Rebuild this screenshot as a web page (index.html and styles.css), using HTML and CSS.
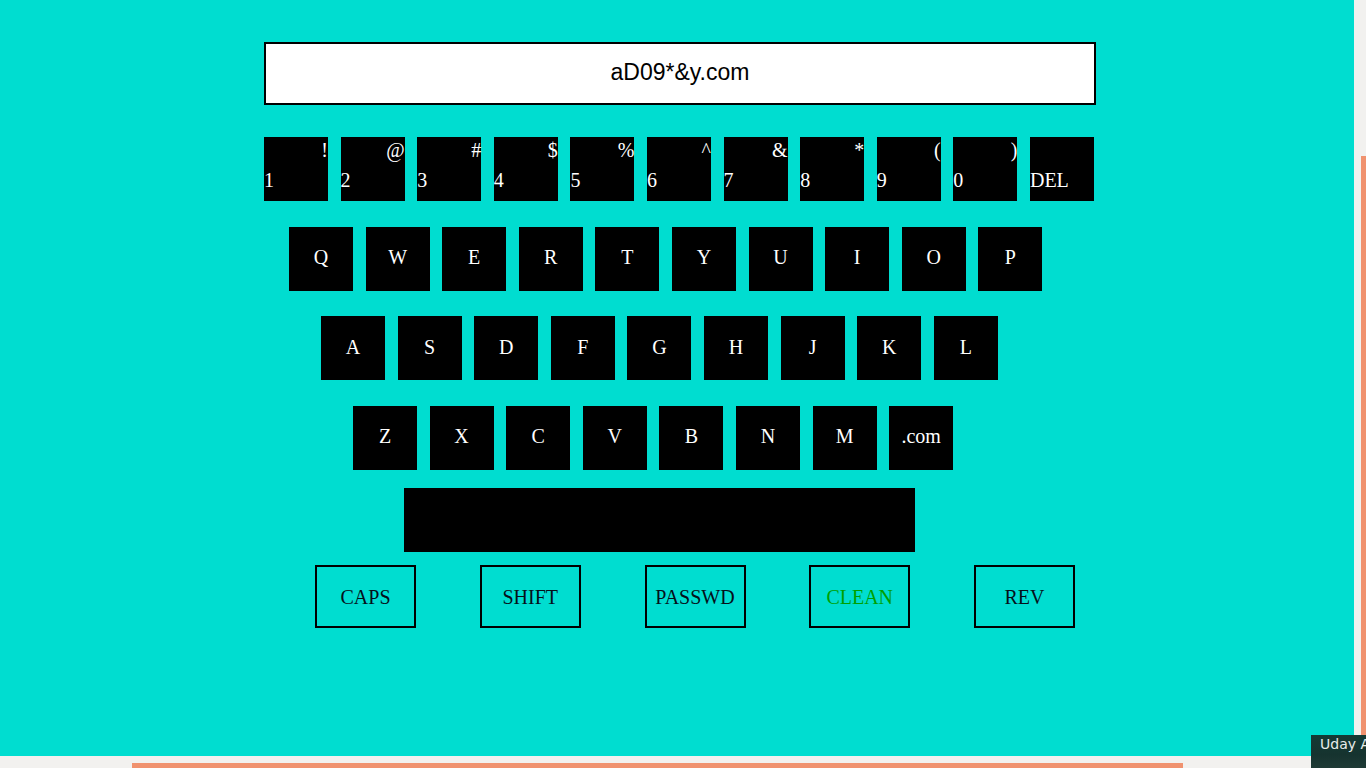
FILE: index.html
```html
<!DOCTYPE html>
<html>
<head>
<meta charset="utf-8">
<title>Keyboard</title>
<link rel="stylesheet" href="styles.css">
</head>
<body>
<div class="page">
  <div class="app">
    <div class="display">aD09*&amp;y.com</div>
    <div class="keyboard">
      <div class="row row-num">
        <div class="key num"><span class="sym">!</span><span class="dig">1</span></div>
        <div class="key num"><span class="sym">@</span><span class="dig">2</span></div>
        <div class="key num"><span class="sym">#</span><span class="dig">3</span></div>
        <div class="key num"><span class="sym">$</span><span class="dig">4</span></div>
        <div class="key num"><span class="sym">%</span><span class="dig">5</span></div>
        <div class="key num"><span class="sym">^</span><span class="dig">6</span></div>
        <div class="key num"><span class="sym">&amp;</span><span class="dig">7</span></div>
        <div class="key num"><span class="sym">*</span><span class="dig">8</span></div>
        <div class="key num"><span class="sym">(</span><span class="dig">9</span></div>
        <div class="key num"><span class="sym">)</span><span class="dig">0</span></div>
        <div class="key num"><span class="sym">&nbsp;</span><span class="dig">DEL</span></div>
      </div>
      <div class="row row-q">
        <div class="key">Q</div><div class="key">W</div><div class="key">E</div><div class="key">R</div><div class="key">T</div>
        <div class="key">Y</div><div class="key">U</div><div class="key">I</div><div class="key">O</div><div class="key">P</div>
      </div>
      <div class="row row-a">
        <div class="key">A</div><div class="key">S</div><div class="key">D</div><div class="key">F</div><div class="key">G</div>
        <div class="key">H</div><div class="key">J</div><div class="key">K</div><div class="key">L</div>
      </div>
      <div class="row row-z">
        <div class="key">Z</div><div class="key">X</div><div class="key">C</div><div class="key">V</div><div class="key">B</div>
        <div class="key">N</div><div class="key">M</div><div class="key">.com</div>
      </div>
    </div>
    <div class="space"></div>
    <div class="controls">
      <div class="ctrl">CAPS</div>
      <div class="ctrl">SHIFT</div>
      <div class="ctrl">PASSWD</div>
      <div class="ctrl ctrl-green">CLEAN</div>
      <div class="ctrl">REV</div>
    </div>
  </div>
</div>
<div class="vscroll"><div class="vthumb"></div></div>
<div class="hscroll"><div class="hthumb"></div></div>
<div class="taskthumb"><span class="tt-label">Uday A</span></div>
</body>
</html>
```

FILE: styles.css
```css
html, body {
  margin: 0;
  padding: 0;
  width: 1366px;
  height: 768px;
  overflow: hidden;
  background: #f2f1ef;
}

.page {
  width: 1354px;
  height: 756px;
  background: #00ddd0;
  overflow: hidden;
}

.app {
  padding: 42px 0 0 264px;
  display: flex;
  flex-direction: column;
  align-items: flex-start;
}

.display {
  box-sizing: border-box;
  width: 832px;
  height: 63px;
  border: 2px solid #000;
  background: #fff;
  display: flex;
  align-items: center;
  justify-content: center;
  font-family: "Liberation Sans", Arial, sans-serif;
  font-size: 23px;
  color: #000;
  padding-bottom: 2px;
}

.keyboard {
  margin-top: 32px;
  display: flex;
  flex-direction: column;
  gap: 25.67px;
}

.row {
  display: flex;
  gap: 12.6px;
}

.row-q { margin-left: 25px; }
.row-a { margin-left: 57px; }
.row-z { margin-left: 89px; }

.key {
  box-sizing: border-box;
  width: 64px;
  height: 64px;
  padding-bottom: 2px;
  background: #000;
  color: #fff;
  font-family: "Liberation Serif", "Times New Roman", serif;
  font-size: 20px;
  display: flex;
  align-items: center;
  justify-content: center;
}

.key.num {
  flex-direction: column;
  align-items: stretch;
  justify-content: flex-start;
  padding-top: 2px;
  padding-bottom: 0;
}

.sym {
  display: block;
  text-align: right;
  line-height: 23px;
  height: 23px;
}

.dig {
  display: block;
  text-align: left;
  line-height: 23px;
  margin-top: 7px;
}

.space {
  margin-top: 18px;
  margin-left: 140px;
  width: 511px;
  height: 64px;
  background: #000;
}

.controls {
  margin-top: 13px;
  margin-left: 51px;
  display: flex;
  gap: 63.75px;
}

.ctrl {
  box-sizing: border-box;
  width: 101px;
  height: 63px;
  border: 2.5px solid #000;
  padding-top: 2px;
  display: flex;
  align-items: center;
  justify-content: center;
  font-family: "Liberation Serif", "Times New Roman", serif;
  font-size: 20px;
  color: #06101a;
}

.ctrl-green {
  color: #00a000;
}

.vscroll {
  position: fixed;
  top: 0;
  right: 0;
  width: 12px;
  height: 756px;
  background: #f2f1ef;
}

.vthumb {
  position: absolute;
  right: 0;
  top: 156px;
  width: 5px;
  height: 612px;
  background: #f0926f;
}

.hscroll {
  position: fixed;
  left: 0;
  bottom: 0;
  width: 1366px;
  height: 12px;
  background: #f2f1ef;
}

.hthumb {
  position: absolute;
  left: 132px;
  bottom: 0;
  width: 1051px;
  height: 5px;
  background: #f0926f;
}

.taskthumb {
  position: fixed;
  left: 1311px;
  top: 735px;
  width: 55px;
  height: 33px;
  background: linear-gradient(180deg, #143a34 0%, #16332f 60%, #1f3b36 100%);
  overflow: hidden;
  white-space: nowrap;
}

.tt-label {
  position: absolute;
  left: 9px;
  top: 1px;
  font-family: "DejaVu Sans", "Noto Sans", sans-serif;
  font-size: 14px;
  color: #e8ecea;
}
```
